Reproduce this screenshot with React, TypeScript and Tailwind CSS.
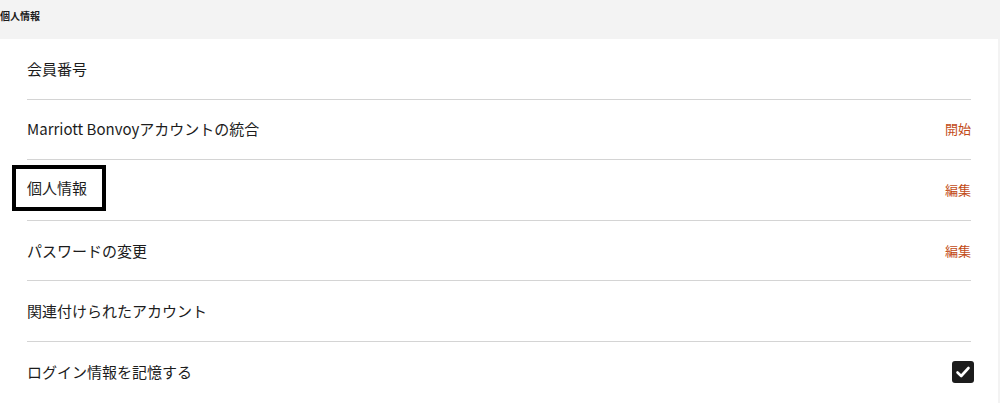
import React from "react";

const rows = [
  { label: "会員番号" },
  { label: "Marriott Bonvoyアカウントの統合", action: "開始" },
  { label: "個人情報", action: "編集", focused: true },
  { label: "パスワードの変更", action: "編集" },
  { label: "関連付けられたアカウント" },
  { label: "ログイン情報を記憶する", checkbox: true },
];

const font = { fontFamily: '"Noto Sans CJK JP", Roboto, "Noto Sans", sans-serif' };

export default function App() {
  return (
    <div className="w-[1000px] h-[403px] bg-[#f3f3f3] overflow-hidden" style={font}>
      <div className="h-[39px] pt-[8px] text-[10px] font-bold leading-[16px] text-[#1c1c1c]">
        個人情報
      </div>
      <div className="w-[998px] bg-white pl-[27px] pr-[27px] pb-4">
        {rows.map((row, i) => (
          <div
            key={i}
            className={
              "flex h-[60.6px] items-center justify-between " +
              (i < rows.length - 1 ? "border-b border-[#d4d4d4]" : "")
            }
          >
            {row.focused ? (
              <span className="-ml-[15px] -mt-[3px] border-4 border-black pl-[11px] pr-[15px] py-[8px] text-[15px] leading-[22px] text-[#1c1c1c]">
                {row.label}
              </span>
            ) : (
              <span className="text-[15px] leading-[22px] text-[#1c1c1c]">{row.label}</span>
            )}
            {row.action && (
              <span className="text-[13px] leading-[20px] text-[#c24b17]">{row.action}</span>
            )}
            {row.checkbox && (
              <span className="-mr-[3px] flex h-[22px] w-[22px] items-center justify-center rounded-[3px] bg-[#1c1c1c]">
                <svg width="16" height="16" viewBox="0 0 16 16" fill="none">
                  <path d="M2.5 8.5 L6.2 12 L13.5 4" stroke="white" strokeWidth="2.6" strokeLinecap="round" strokeLinejoin="round" />
                </svg>
              </span>
            )}
          </div>
        ))}
      </div>
    </div>
  );
}
